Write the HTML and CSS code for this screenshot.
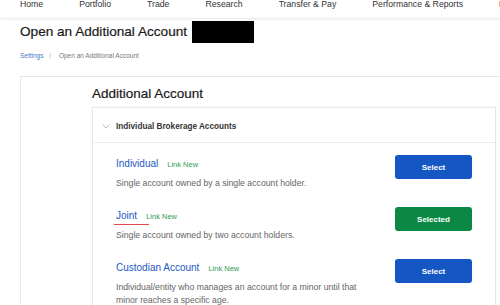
FILE: index.html
```html
<!DOCTYPE html>
<html lang="en">
<head>
    <meta charset="UTF-8">
    <link rel="stylesheet" href="styles.css">
</head>
<body>
    <nav class="top-nav">
        <a href="#">Home</a>
        <a href="#">Portfolio</a>
        <a href="#">Trade</a>
        <a href="#">Research</a>
        <a href="#">Transfer &amp; Pay</a>
        <a href="#">Performance &amp; Reports</a>
        <a href="#">E</a>
    </nav>

    <div class="page">
        <div class="page-title">
            <h1>Open an Additional Account</h1>
            <span class="redacted"></span>
        </div>

        <div class="breadcrumb">
            <a href="#">Settings</a>
            <span class="sep">/</span>
            <span>Open an Additional Account</span>
        </div>

        <div class="card">
            <h2>Additional Account</h2>

            <div class="accordion">
                <div class="accordion-header">
                    <svg class="chevron" width="8" height="5" viewBox="0 0 8 5">
                        <path d="M0.5 0.5 L4 4 L7.5 0.5" fill="none" stroke="#b5b5b5" stroke-width="0.9"/>
                    </svg>
                    <span>Individual Brokerage Accounts</span>
                </div>

                <div class="account-row">
                    <div class="account-info">
                        <div class="account-title">
                            <span class="account-name">Individual</span>
                            <span class="link-new">Link New</span>
                        </div>
                        <p class="account-desc">Single account owned by a single account holder.</p>
                    </div>
                    <button class="btn btn-select">Select</button>
                </div>

                <div class="account-row">
                    <div class="account-info">
                        <div class="account-title">
                            <span class="account-name active">Joint</span>
                            <span class="link-new">Link New</span>
                        </div>
                        <p class="account-desc">Single account owned by two account holders.</p>
                    </div>
                    <button class="btn btn-selected">Selected</button>
                </div>

                <div class="account-row">
                    <div class="account-info">
                        <div class="account-title">
                            <span class="account-name">Custodian Account</span>
                            <span class="link-new">Link New</span>
                        </div>
                        <p class="account-desc">Individual/entity who manages an account for a minor until that minor reaches a specific age.</p>
                    </div>
                    <button class="btn btn-select">Select</button>
                </div>
            </div>
        </div>
    </div>
</body>
</html>
```

FILE: styles.css
```css
body {
    font-family: "Liberation Sans", Arial, sans-serif;
    margin: 0;
    padding: 0;
    background-color: #fff;
    color: #222;
    overflow: hidden;
}

a {
    text-decoration: none;
}

.top-nav {
    display: flex;
    gap: 36px;
    height: 18px;
    padding: 0 20px;
    white-space: nowrap;
    border-bottom: 1px solid #ececec;
    box-shadow: 0 1px 2px rgba(0, 0, 0, 0.05);
    overflow: hidden;
}

.top-nav a {
    font-size: 8.7px;
    line-height: 8px;
    color: #333;
}

.page {
    padding: 0 0 0 20px;
}

.page-title {
    display: flex;
    align-items: center;
    gap: 5px;
    margin-top: 2px;
}

.page-title h1 {
    margin: 0;
    font-size: 13.6px;
    line-height: 22px;
    font-weight: normal;
    color: #1a1a1a;
    -webkit-text-stroke: 0.2px #1a1a1a;
}

.redacted {
    display: block;
    width: 62px;
    height: 22px;
    background-color: #000;
}

.breadcrumb {
    margin-top: 8px;
    font-size: 6.5px;
    line-height: 10px;
    color: #777;
}

.breadcrumb a {
    color: #4a78c8;
}

.breadcrumb .sep {
    margin: 0 6px 0 4px;
    color: #aaa;
}

.card {
    margin-top: 15px;
    margin-right: -24px;
    padding: 9px 27px 0 71px;
    border: 1px solid #e8e8e8;
    border-bottom: none;
    height: 300px;
}

.card h2 {
    margin: 0 0 5px;
    font-size: 13.5px;
    line-height: 16px;
    font-weight: normal;
    color: #1a1a1a;
    -webkit-text-stroke: 0.2px #1a1a1a;
}

.accordion {
    border: 1px solid #e6e6e6;
    box-shadow: 0 0 2px rgba(0, 0, 0, 0.06);
    height: 300px;
}

.accordion-header {
    display: flex;
    align-items: center;
    height: 35px;
    padding: 2px 0 0 9px;
    box-sizing: border-box;
    border-bottom: 1px solid #ececec;
    font-size: 8.2px;
    font-weight: bold;
    color: #333;
}

.chevron {
    margin-right: 6px;
}

.account-row {
    display: flex;
    justify-content: space-between;
    align-items: flex-start;
    padding: 12px 23px 5px;
}

.account-title {
    display: flex;
    align-items: baseline;
    margin-top: 2px;
    line-height: 14px;
}

.account-name {
    position: relative;
    font-size: 10px;
    color: #2458c2;
    margin-right: 9px;
}

.account-name.active::after {
    content: "";
    position: absolute;
    left: -2px;
    bottom: -2px;
    width: 35px;
    height: 1px;
    background-color: #e5484d;
}

.link-new {
    font-size: 7.5px;
    color: #2f9b57;
}

.account-desc {
    margin: 5px 0 0;
    max-width: 255px;
    font-size: 8.7px;
    line-height: 13px;
    color: #666;
}

.btn {
    width: 77px;
    height: 24px;
    border: none;
    border-radius: 3px;
    color: #fff;
    font-family: "Liberation Sans", Arial, sans-serif;
    font-size: 8px;
    font-weight: bold;
    cursor: pointer;
    flex-shrink: 0;
}

.btn-select {
    background-color: #1456c2;
}

.btn-selected {
    background-color: #0b8944;
}
```
